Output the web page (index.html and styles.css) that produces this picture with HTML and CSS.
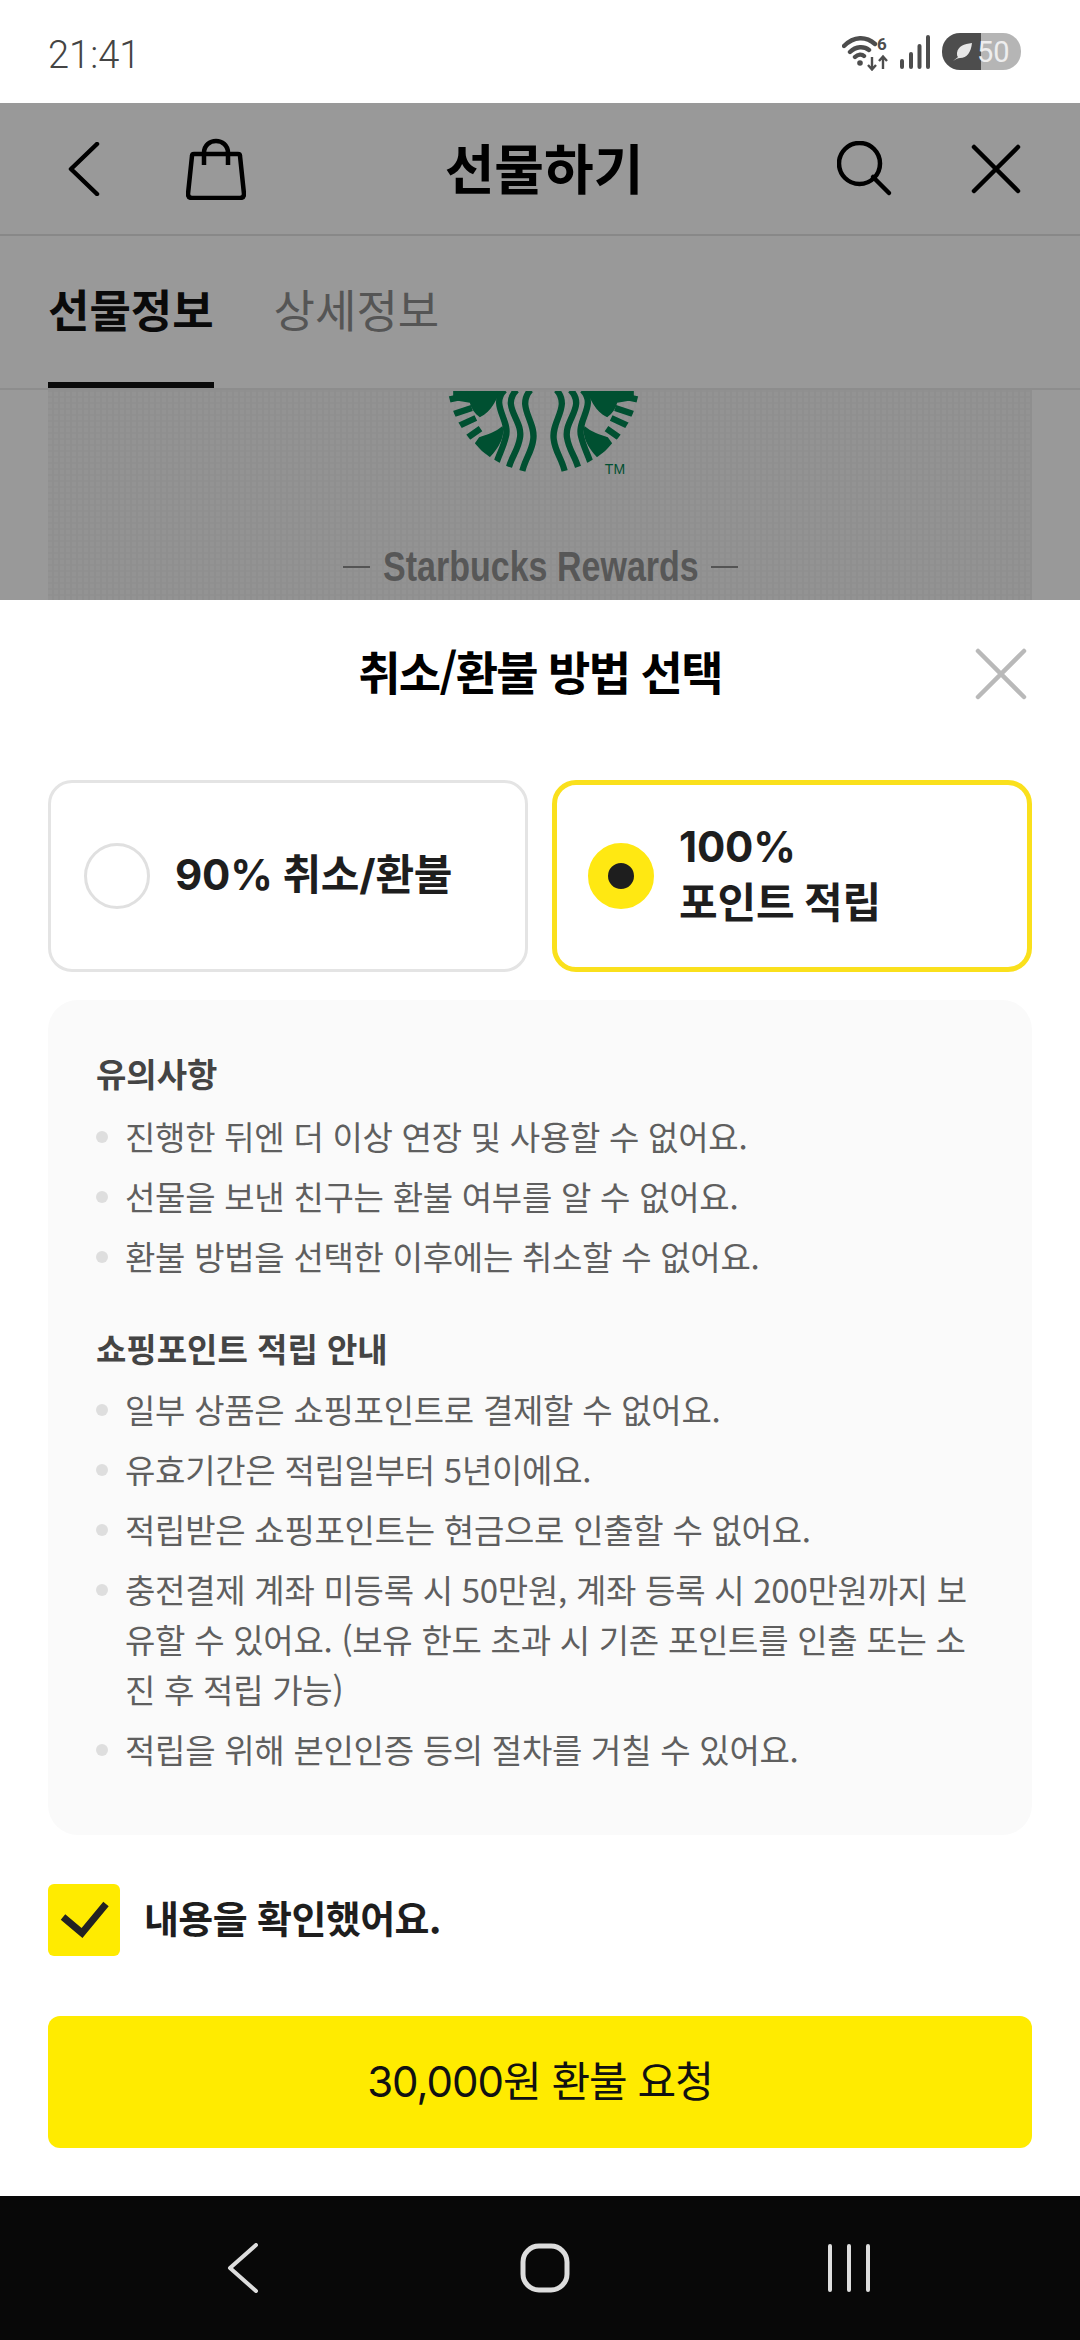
FILE: index.html
```html
<!DOCTYPE html>
<html lang="ko">
<head>
  <meta charset="UTF-8">
  <meta name="viewport" content="width=device-width, initial-scale=1.0">
  <title>선물하기</title>
  <link rel="stylesheet" href="styles.css">
</head>
<body>
  <div class="status">
    <span class="time">21:41</span>
    <div class="status-icons">
      <svg class="wifi" width="46" height="38" viewBox="0 0 46 38">
        <path d="M2 13C12 3 24 3 33 11M8 19C14 13 22 13 27 17M13 24C16 21 20 21 22 23" fill="none" stroke="#4d4d4d" stroke-width="4.400" stroke-linecap="round"/>
        <circle cx="18" cy="30" r="2.800" fill="#4d4d4d"/>
        <path d="M30 24V36M26 32L30 36.500L34 32M41 36V24M37 28L41 23.500L45 28" fill="none" stroke="#4d4d4d" stroke-width="2.400"/>
        <text x="35" y="17" class="wifi-six">6</text>
      </svg>
      <svg class="signal" width="30" height="34" viewBox="0 0 30 34">
        <g fill="#4d4d4d">
          <rect x="0" y="24" width="4" height="10" rx="2"/>
          <rect x="9" y="17" width="4" height="17" rx="2"/>
          <rect x="17.500" y="9" width="4" height="25" rx="2"/>
          <rect x="26" y="0" width="4" height="34" rx="2"/>
        </g>
      </svg>
      <div class="batt">
        <svg width="22" height="22" viewBox="0 0 22 22"><path d="M1 20C4 18 6 17 8 17C15 17 19 11 20 2C12 3 6 5 5 12C5 14 5 15 6 16" fill="#e8e8e8"/></svg>
        <span>50</span>
      </div>
    </div>
  </div>

  <div class="behind">
    <div class="topbar">
      <div class="topbar-left">
        <svg width="32" height="54" viewBox="0 0 32 54"><path d="M29 2L3 27L29 52" fill="none" stroke="#000" stroke-width="4.500" stroke-linecap="round" stroke-linejoin="round"/></svg>
        <svg width="60" height="62" viewBox="0 0 60 62"><path d="M8 16H52Q54 16 54 18L58 56Q58 60 54 60H6Q2 60 2 56L6 18Q6 16 8 16Z" fill="none" stroke="#000" stroke-width="4.500"/><path d="M18 27V15C18 -1 42 -1 42 15V27" fill="none" stroke="#000" stroke-width="4.500"/></svg>
      </div>
      <h1 class="page-title">선물하기</h1>
      <div class="topbar-right">
        <svg width="56" height="56" viewBox="0 0 56 56"><circle cx="22.500" cy="22.500" r="20.500" fill="none" stroke="#000" stroke-width="4.500"/><path d="M36 36L52 52" stroke="#000" stroke-width="4.500" stroke-linecap="round"/></svg>
        <svg width="50" height="50" viewBox="0 0 50 50"><path d="M3 3L47 47M47 3L3 47" stroke="#000" stroke-width="4.500" stroke-linecap="round"/></svg>
      </div>
    </div>
    <div class="tabs">
      <span class="tab tab-on">선물정보</span>
      <span class="tab">상세정보</span>
    </div>
    <div class="gift-image">
      <svg class="logo" width="193" height="88" viewBox="322 33 578 264">
        <defs>
          <clipPath id="siren"><circle cx="611" cy="-10" r="290"/></clipPath>
          <g id="siren-half" clip-path="url(#siren)" fill="#008552" stroke="none">
            <path d="M340 33H482C468 60 458 92 420 112C404 100 394 86 390 68L340 60Z"/>
            <path d="M405 190L418 172C440 164 468 156 488 138C498 172 472 210 446 236Z"/>
            <g fill="none" stroke="#008552" stroke-width="19">
              <path d="M322 60L386 46M335 104L396 84M352 140L408 114M376 178L422 146"/>
              <path d="M572 30C528 80 590 125 580 180C575 220 552 240 545 285"/>
              <path d="M530 30C482 80 552 122 540 175C535 210 512 235 505 270"/>
              <path d="M494 30C450 75 512 120 498 170C490 205 476 225 468 255"/>
            </g>
          </g>
        </defs>
        <use href="#siren-half"/>
        <use href="#siren-half" transform="translate(1222 0) scale(-1 1)"/>
        <text x="795" y="282" class="logo-tm">TM</text>
      </svg>
      <div class="rewards">
        <i class="rewards-dash"></i>
        <span class="rewards-text">Starbucks Rewards</span>
        <i class="rewards-dash"></i>
      </div>
    </div>
    <div class="dim"></div>
  </div>

  <div class="sheet">
    <div class="sheet-head">
      <h2 class="sheet-title">취소/환불 방법 선택</h2>
      <svg class="sheet-close" width="52" height="52" viewBox="0 0 52 52"><path d="M3 3L49 49M49 3L3 49" stroke="#b9b9b9" stroke-width="4.500" stroke-linecap="round"/></svg>
    </div>

    <div class="options">
      <div class="option">
        <span class="radio"></span>
        <span class="option-text">90% 취소/환불</span>
      </div>
      <div class="option option-on">
        <span class="radio radio-on"></span>
        <span class="option-text">100%<br>포인트 적립</span>
      </div>
    </div>

    <div class="notice">
      <h3>유의사항</h3>
      <ul>
        <li>진행한 뒤엔 더 이상 연장 및 사용할 수 없어요.</li>
        <li>선물을 보낸 친구는 환불 여부를 알 수 없어요.</li>
        <li>환불 방법을 선택한 이후에는 취소할 수 없어요.</li>
      </ul>
      <h3 class="notice-second">쇼핑포인트 적립 안내</h3>
      <ul class="notice-list-second">
        <li>일부 상품은 쇼핑포인트로 결제할 수 없어요.</li>
        <li>유효기간은 적립일부터 5년이에요.</li>
        <li>적립받은 쇼핑포인트는 현금으로 인출할 수 없어요.</li>
        <li>충전결제 계좌 미등록 시 50만원, 계좌 등록 시 200만원까지 보유할 수 있어요. (보유 한도 초과 시 기존 포인트를 인출 또는 소진 후 적립 가능)</li>
        <li>적립을 위해 본인인증 등의 절차를 거칠 수 있어요.</li>
      </ul>
    </div>

    <div class="confirm">
      <span class="checkbox">
        <svg width="72" height="72" viewBox="0 0 72 72"><path d="M15 33L34 49L58 20" fill="none" stroke="#222" stroke-width="7"/></svg>
      </span>
      <span class="confirm-text">내용을 확인했어요.</span>
    </div>

    <button class="refund"><span class="refund-text">30,000원 환불 요청</span></button>
  </div>

  <div class="navbar">
    <svg width="32" height="50" viewBox="0 0 32 50"><path d="M29 2L3 25L29 48" fill="none" stroke="#ddd" stroke-width="4" stroke-linecap="round" stroke-linejoin="round"/></svg>
    <svg class="nav-home" width="50" height="50" viewBox="0 0 50 50"><rect x="3" y="3" width="44" height="44" rx="16" fill="none" stroke="#ddd" stroke-width="5"/></svg>
    <svg width="44" height="50" viewBox="0 0 44 50"><path d="M3 3V47M22 3V47M41 3V47" stroke="#ddd" stroke-width="4" stroke-linecap="round"/></svg>
  </div>
</body>
</html>
```

FILE: styles.css
```css
* {
  box-sizing: border-box;
}
body {
  margin: 0;
  width: 1080px;
  height: 2340px;
  display: flex;
  flex-direction: column;
  overflow: hidden;
  background: #fff;
  font-family: "Noto Sans CJK KR", "Noto Sans", sans-serif;
  color: #1e1e1e;
}
h1, h2, h3, ul {
  margin: 0;
  padding: 0;
}

/* status bar */
.status {
  height: 103px;
  flex: none;
  display: flex;
  align-items: center;
  justify-content: space-between;
  padding: 0 59px 0 48px;
}
.time {
  padding-top: 6px;
  font-family: Roboto, sans-serif;
  font-size: 38px;
  font-weight: 300;
  color: #444;
}
.status-icons {
  display: flex;
  align-items: center;
}
.wifi {
  margin-right: 12px;
}
.wifi-six {
  font-family: Roboto, sans-serif;
  font-size: 17px;
  font-weight: 700;
  fill: #4d4d4d;
}
.signal {
  margin-right: 12px;
}
.batt {
  width: 79px;
  height: 37px;
  border-radius: 18px;
  background: linear-gradient(90deg, #4d4d4d 50%, #b5b5b5 50%);
  display: flex;
  align-items: center;
  gap: 3px;
  padding-left: 10px;
  font-family: Roboto, sans-serif;
  font-size: 29px;
  color: #eee;
}

/* page behind the sheet */
.behind {
  position: relative;
  height: 497px;
  flex: none;
  overflow: hidden;
  background: #fff;
}
.dim {
  position: absolute;
  inset: 0;
  background: rgba(0, 0, 0, 0.4);
}
.topbar {
  height: 133px;
  display: grid;
  grid-template-columns: 1fr auto 1fr;
  align-items: center;
  border-bottom: 2px solid #e3e3e3;
}
.topbar-left {
  display: flex;
  align-items: center;
  gap: 86px;
  padding-left: 68px;
}
.topbar-right {
  display: flex;
  align-items: center;
  justify-content: flex-end;
  gap: 78px;
  padding-right: 59px;
}
.page-title {
  padding: 0 0 5px 8px;
  font-size: 54px;
  font-weight: 700;
  color: #000;
}
.tabs {
  height: 154px;
  display: flex;
  gap: 60px;
  padding: 0 48px;
  border-bottom: 2px solid #ececec;
}
.tab {
  height: 152px;
  padding-top: 43px;
  font-size: 45px;
  line-height: 60px;
  color: #8e8e8e;
}
.tab-on {
  font-weight: 700;
  color: #111;
  border-bottom: 6px solid #111;
}
.gift-image {
  height: 210px;
  margin: 0 48px;
  display: flex;
  flex-direction: column;
  align-items: center;
  background-color: #f6f6f6;
  background-image:
    repeating-linear-gradient(90deg, transparent 0 4px, #efefef 4px 6px),
    repeating-linear-gradient(0deg, transparent 0 4px, #f0f0f0 4px 6px);
}
.logo {
  flex: none;
  margin: 1px 0 0 7px;
}
.logo-tm {
  font-family: "Liberation Sans", sans-serif;
  font-size: 42px;
  fill: #008552;
}
.rewards {
  display: flex;
  align-items: center;
  gap: 13px;
  margin-top: 65px;
  height: 46px;
}
.rewards-dash {
  width: 27px;
  height: 2px;
  background: #8c8c8c;
}
.rewards-text {
  width: 315px;
  font-family: "Liberation Sans", sans-serif;
  font-size: 42px;
  font-weight: 700;
  white-space: nowrap;
  color: #929292;
  transform: scaleX(0.81);
  transform-origin: left center;
}

/* bottom sheet */
.sheet {
  flex: 1;
  padding: 0 48px;
  background: #fff;
}
.sheet-head {
  height: 148px;
  display: grid;
  grid-template-columns: 1fr auto 1fr;
  align-items: center;
}
.sheet-title {
  grid-column: 2;
  padding-bottom: 8px;
  font-size: 46px;
  font-weight: 700;
  color: #000;
  letter-spacing: -1.7px;
}
.sheet-close {
  justify-self: end;
  margin-right: 5px;
}
.options {
  display: grid;
  grid-template-columns: 480px 480px;
  gap: 24px;
  margin-top: 32px;
  height: 192px;
}
.option {
  display: flex;
  align-items: center;
  gap: 25px;
  padding-left: 33px;
  border: 3px solid #e4e4e4;
  border-radius: 24px;
}
.option-on {
  padding-left: 31px;
  border: 5px solid #fae01c;
}
.radio {
  width: 66px;
  height: 66px;
  flex: none;
  border: 3px solid #e0e0e0;
  border-radius: 50%;
}
.radio-on {
  border: 20px solid #ffe812;
  background: #1e1e1e;
}
.option-text {
  padding-bottom: 3px;
  font-family: Inter, "Noto Sans CJK KR", sans-serif;
  font-size: 42px;
  line-height: 56px;
  font-weight: 700;
  color: #1e1e1e;
  letter-spacing: -0.2px;
}
.notice {
  margin-top: 28px;
  padding: 45px 48px 60px;
  height: 835px;
  border-radius: 30px;
  background: #fafafa;
}
.notice h3 {
  font-size: 33px;
  line-height: 56px;
  font-weight: 700;
  color: #444;
}
.notice .notice-second {
  margin-top: 39px;
}
.notice ul {
  list-style: none;
  margin-top: 10px;
  display: flex;
  flex-direction: column;
  gap: 10px;
}
.notice .notice-list-second {
  margin-top: 8px;
}
.notice li {
  position: relative;
  padding-left: 29px;
  font-size: 33px;
  line-height: 50px;
  color: #5f5f5f;
  letter-spacing: -0.27px;
}
.notice li::before {
  content: "";
  position: absolute;
  left: 0;
  top: 20px;
  width: 12px;
  height: 12px;
  border-radius: 50%;
  background: #dedede;
}
.confirm {
  display: flex;
  align-items: center;
  gap: 24px;
  margin-top: 49px;
}
.checkbox {
  width: 72px;
  height: 72px;
  border-radius: 6px;
  background: #ffeb00;
}
.checkbox svg {
  display: block;
}
.confirm-text {
  padding-bottom: 7px;
  font-size: 38px;
  font-weight: 700;
  color: #1e1e1e;
  letter-spacing: -0.6px;
}
.refund {
  display: block;
  width: 100%;
  height: 132px;
  margin-top: 60px;
  border: none;
  border-radius: 12px;
  background: #ffeb00;
  font-family: Inter, "Noto Sans CJK KR", sans-serif;
  font-size: 42px;
  color: #111;
  letter-spacing: -1px;
}
.refund-text {
  display: block;
  padding-bottom: 7px;
}

/* system nav */
.navbar {
  height: 144px;
  flex: none;
  display: flex;
  align-items: center;
  gap: 257px;
  padding: 0 0 0 227px;
  background: #080808;
}
.nav-home {
  margin-left: 4px;
}
```
